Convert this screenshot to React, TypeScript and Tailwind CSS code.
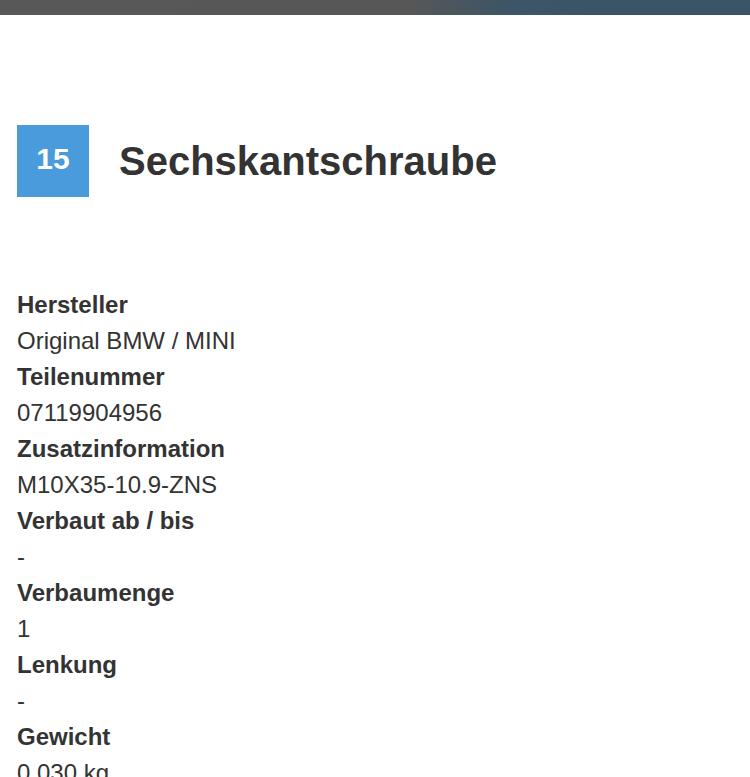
// Part detail — single item view
const details: { label: string; value: string }[] = [
  { label: 'Hersteller', value: 'Original BMW / MINI' },
  { label: 'Teilenummer', value: '07119904956' },
  { label: 'Zusatzinformation', value: 'M10X35-10.9-ZNS' },
  { label: 'Verbaut ab / bis', value: '-' },
  { label: 'Verbaumenge', value: '1' },
  { label: 'Lenkung', value: '-' },
  { label: 'Gewicht', value: '0,030 kg' },
]

export default function App() {
  return (
    <div
      className="h-[777px] overflow-hidden bg-white text-[#333333]"
      style={{ fontFamily: '"Liberation Sans", Arial, sans-serif' }}
    >
      {/* ── Top bar ───────────────────────────── */}
      <div className="h-[15px] bg-[linear-gradient(90deg,#585858_0%,#575757_54%,#3d5566_68%,#3a5566_100%)]" />

      {/* ── Title ─────────────────────────────── */}
      <div className="mt-[110px] flex items-center gap-[30px] px-[17px]">
        <div className="flex h-[72px] w-[72px] items-center justify-center bg-[#4a9bdb] pb-[5px]">
          <span className="text-[30px] font-bold text-white">15</span>
        </div>
        <h1 className="text-[40px] font-bold leading-none">Sechskantschraube</h1>
      </div>

      {/* ── Details ───────────────────────────── */}
      <dl className="mt-[90px] px-[17px] text-[24px] leading-[36px]">
        {details.map((d) => (
          <div key={d.label}>
            <dt className="font-bold">{d.label}</dt>
            <dd>{d.value}</dd>
          </div>
        ))}
      </dl>
    </div>
  )
}
